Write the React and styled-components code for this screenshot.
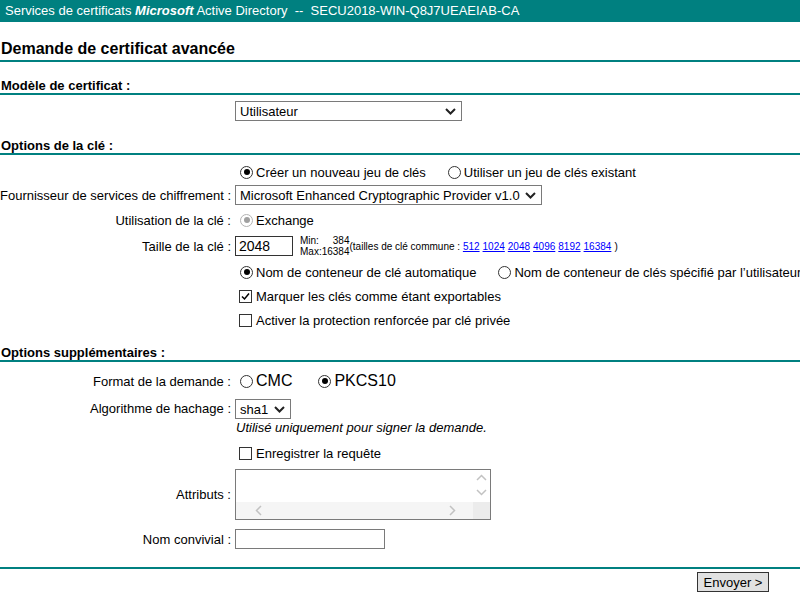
import React from "react";
import styled, { createGlobalStyle } from "styled-components";

const TEAL = "#008080";

const GlobalStyle = createGlobalStyle`
  html, body {
    margin: 0;
    padding: 0;
    background: #fff;
  }
  body {
    font-family: "Liberation Sans", Arial, sans-serif;
    font-size: 13px;
    color: #000;
  }
`;

const Page = styled.div`
  width: 800px;
  height: 595px;
  overflow: hidden;
`;

const TopBar = styled.div`
  height: 22px;
  line-height: 22px;
  background: ${TEAL};
  color: #fff;
  font-size: 13px;
  padding-left: 5px;
  white-space: pre;

  & > b {
    font-style: italic;
  }
`;

const Title = styled.h1`
  margin: 18px 0 0;
  padding: 0 0 2px 1px;
  font-size: 16px;
  line-height: 18px;
  font-weight: bold;
  border-bottom: 2px solid ${TEAL};
`;

const SectionTitle = styled.h2`
  margin: ${({ $top }) => $top}px 0 0;
  padding: 0 0 0 1px;
  font-size: 13px;
  line-height: 15px;
  font-weight: bold;
  border-bottom: 2px solid ${TEAL};
`;

const Rows = styled.div`
  display: flex;
  flex-direction: column;
  padding-top: ${({ $top }) => $top}px;
`;

const Row = styled.div`
  display: flex;
  align-items: ${({ $align }) => $align || "center"};
  min-height: 20px;
  margin-top: ${({ $gap }) => ($gap === undefined ? 5 : $gap)}px;
`;

const Label = styled.div`
  width: 231px;
  text-align: right;
  padding-right: 4px;
  flex-shrink: 0;
  white-space: nowrap;
  line-height: ${({ $line }) => ($line ? `${$line}px` : "normal")};
`;

const Field = styled.div`
  display: flex;
  flex-direction: ${({ $column }) => ($column ? "column" : "row")};
  align-items: ${({ $column }) => ($column ? "flex-start" : "center")};
  white-space: nowrap;
`;

const Option = styled.label`
  display: inline-flex;
  align-items: center;
  font-size: ${({ $size }) => $size || 13}px;
  margin-right: ${({ $space }) => $space || 17}px;
  color: #000;
`;

const RadioMark = styled.span`
  display: inline-block;
  box-sizing: border-box;
  width: 13px;
  height: 13px;
  margin: 0 3px 0 5px;
  border-radius: 50%;
  border: 1px solid ${({ $disabled }) => ($disabled ? "#b3b3b3" : "#333")};
  background: #fff;
  position: relative;
  flex-shrink: 0;

  &::after {
    content: "";
    display: ${({ $checked }) => ($checked ? "block" : "none")};
    position: absolute;
    left: 2.5px;
    top: 2.5px;
    width: 6px;
    height: 6px;
    border-radius: 50%;
    background: ${({ $disabled }) => ($disabled ? "#a0a0a0" : "#000")};
  }
`;

const CheckMark = styled.span`
  display: inline-flex;
  align-items: center;
  justify-content: center;
  box-sizing: border-box;
  width: 13px;
  height: 13px;
  margin: 0 4px 0 4px;
  border: 1px solid #333;
  background: #fff;
  flex-shrink: 0;
`;

const SelectBox = styled.div`
  display: inline-flex;
  align-items: center;
  box-sizing: border-box;
  width: ${({ $width }) => $width}px;
  height: 20px;
  border: 1px solid #7a7a7a;
  background: #fff;
  padding: 0 5px 0 4px;
  font-size: 13px;

  & > span {
    flex: 1;
  }
`;

const TextInput = styled.div`
  box-sizing: border-box;
  width: ${({ $width }) => $width}px;
  height: 20px;
  border: 1px solid ${({ $dark }) => ($dark ? "#333" : "#7a7a7a")};
  background: #fff;
  padding: 0 3px;
  font-size: 14px;
  line-height: 18px;
`;

const Limits = styled.div`
  display: grid;
  grid-template-columns: auto auto;
  font-size: 10px;
  line-height: 11px;
  margin-left: 7px;
  color: #000;

  & > span:nth-child(even) {
    text-align: right;
  }
`;

const Common = styled.span`
  font-size: 10px;
  margin-top: 1px;

  a {
    color: #0000ff;
    text-decoration: underline;
    margin-right: 3px;
  }
`;

const Hint = styled.div`
  font-style: italic;
  font-size: 13px;
  line-height: 15px;
  margin: 1px 0 0 1px;
`;

const AreaBox = styled.div`
  display: grid;
  grid-template-columns: 1fr 17px;
  grid-template-rows: 1fr 17px;
  box-sizing: border-box;
  width: 256px;
  height: 51px;
  border: 1px solid #7a7a7a;
  background: #fff;

  textarea {
    border: none;
    outline: none;
    resize: none;
    padding: 0;
    margin: 0;
    font-family: inherit;
  }
`;

const VScroll = styled.div`
  display: flex;
  flex-direction: column;
  align-items: center;
  padding-top: 4px;
  gap: 8px;
`;

const HScroll = styled.div`
  display: flex;
  align-items: center;
  justify-content: space-between;
  background: #f5f5f5;
  padding: 0 17px 0 19px;
`;

const Corner = styled.div`
  background: #ececec;
`;

const Footer = styled.div`
  margin-top: 18px;
  border-top: 2px solid ${TEAL};
  display: flex;
  justify-content: flex-end;
  padding: 3px 31px 0 0;
`;

const SubmitButton = styled.button`
  box-sizing: border-box;
  width: 72px;
  height: 20px;
  border: 1px solid #333;
  background: #e1e1e1;
  font-family: inherit;
  font-size: 13px;
  padding: 0;
  color: #000;
`;

const Chevron = ({ dir = "down", color = "#222", w = 11, h = 7, sw = 2 }) => {
  const paths = {
    down: "M1 1 L5.5 5.5 L10 1",
    up: "M1 6 L5.5 1.5 L10 6",
  };
  return (
    <svg width={w} height={h} viewBox="0 0 11 7">
      <path d={paths[dir]} fill="none" stroke={color} strokeWidth={sw} />
    </svg>
  );
};

const Side = ({ dir }) => (
  <svg width="7" height="11" viewBox="0 0 7 11">
    <path
      d={dir === "left" ? "M6 1 L1.5 5.5 L6 10" : "M1 1 L5.5 5.5 L1 10"}
      fill="none"
      stroke="#c2c2c2"
      strokeWidth="1.5"
    />
  </svg>
);

const Radio = ({ checked, disabled, children, size, space }) => (
  <Option $size={size} $space={space}>
    <RadioMark $checked={checked} $disabled={disabled} />
    {children}
  </Option>
);

const Check = ({ checked, children }) => (
  <Option>
    <CheckMark>
      {checked && (
        <svg width="9" height="9" viewBox="0 0 9 9">
          <path d="M1 4.5 L3.5 7 L8 1.5" fill="none" stroke="#000" strokeWidth="1.5" />
        </svg>
      )}
    </CheckMark>
    {children}
  </Option>
);

const Select = ({ width, value }) => (
  <SelectBox $width={width}>
    <span>{value}</span>
    <Chevron />
  </SelectBox>
);

const App = () => {
  const sizes = ["512", "1024", "2048", "4096", "8192", "16384"];

  return (
    <Page>
      <GlobalStyle />
      <TopBar>
        Services de certificats <b>Microsoft</b> Active Directory  --  SECU2018-WIN-Q8J7UEAEIAB-CA
      </TopBar>

      <Title>Demande de certificat avancée</Title>

      <SectionTitle $top={16}>Modèle de certificat :</SectionTitle>
      <Rows $top={1}>
        <Row>
          <Label />
          <Field>
            <Select width={227} value="Utilisateur" />
          </Field>
        </Row>
      </Rows>

      <SectionTitle $top={17}>Options de la clé :</SectionTitle>
      <Rows $top={2}>
        <Row>
          <Label />
          <Field>
            <Radio checked>Créer un nouveau jeu de clés</Radio>
            <Radio>Utiliser un jeu de clés existant</Radio>
          </Field>
        </Row>
        <Row $gap={3}>
          <Label>Fournisseur de services de chiffrement :</Label>
          <Field>
            <Select width={307} value="Microsoft Enhanced Cryptographic Provider v1.0" />
          </Field>
        </Row>
        <Row>
          <Label>Utilisation de la clé :</Label>
          <Field>
            <Radio checked disabled>Exchange</Radio>
          </Field>
        </Row>
        <Row>
          <Label>Taille de la clé :</Label>
          <Field>
            <TextInput $width={58} $dark>2048</TextInput>
            <Limits>
              <span>Min:</span>
              <span>384</span>
              <span>Max:</span>
              <span>16384</span>
            </Limits>
            <Common>
              (tailles de clé commune :{" "}
              {sizes.map((s) => (
                <a key={s} href="#">
                  {s}
                </a>
              ))}
              )
            </Common>
          </Field>
        </Row>
        <Row>
          <Label />
          <Field>
            <Radio checked>Nom de conteneur de clé automatique</Radio>
            <Radio>Nom de conteneur de clés spécifié par l’utilisateur</Radio>
          </Field>
        </Row>
        <Row $gap={4}>
          <Label />
          <Field>
            <Check checked>Marquer les clés comme étant exportables</Check>
          </Field>
        </Row>
        <Row $gap={4}>
          <Label />
          <Field>
            <Check>Activer la protection renforcée par clé privée</Check>
          </Field>
        </Row>
      </Rows>

      <SectionTitle $top={15}>Options supplémentaires :</SectionTitle>
      <Rows $top={4}>
        <Row>
          <Label>Format de la demande :</Label>
          <Field>
            <Radio size={16} space={21}>CMC</Radio>
            <Radio checked size={16}>PKCS10</Radio>
          </Field>
        </Row>
        <Row $gap={8} $align="flex-start">
          <Label $line={20}>Algorithme de hachage :</Label>
          <Field $column>
            <Select width={56} value="sha1" />
            <Hint>Utilisé uniquement pour signer la demande.</Hint>
          </Field>
        </Row>
        <Row $gap={8}>
          <Label />
          <Field>
            <Check>Enregistrer la requête</Check>
          </Field>
        </Row>
        <Row $gap={6}>
          <Label>Attributs :</Label>
          <Field>
            <AreaBox>
              <textarea aria-label="Attributs" />
              <VScroll>
                <Chevron dir="up" color="#c2c2c2" w={11} h={7} sw={1.5} />
                <Chevron dir="down" color="#c2c2c2" w={11} h={7} sw={1.5} />
              </VScroll>
              <HScroll>
                <Side dir="left" />
                <Side dir="right" />
              </HScroll>
              <Corner />
            </AreaBox>
          </Field>
        </Row>
        <Row $gap={9}>
          <Label>Nom convivial :</Label>
          <Field>
            <TextInput $width={150} />
          </Field>
        </Row>
      </Rows>

      <Footer>
        <SubmitButton>Envoyer &gt;</SubmitButton>
      </Footer>
    </Page>
  );
};

export default App;
